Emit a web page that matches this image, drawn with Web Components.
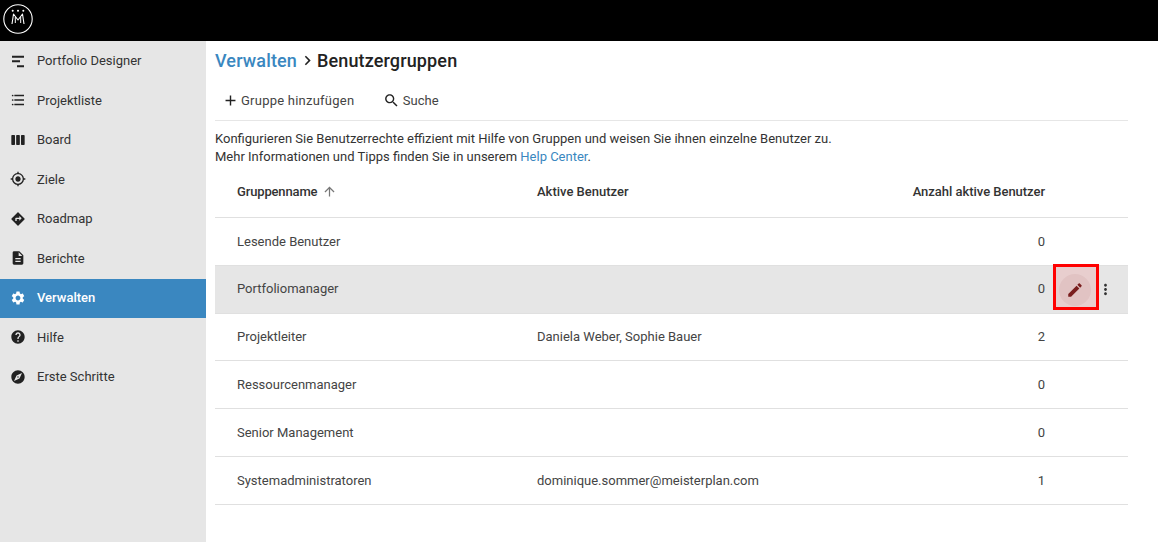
<!DOCTYPE html>
<html lang="de"><head><meta charset="utf-8"><title>Benutzergruppen</title>
<style>
html,body{margin:0;height:100%;background:#fff}
body{font:13px Roboto,"Liberation Sans",sans-serif;color:#333}
</style></head><body>
<app-shell>
  <top-bar slot="top"></top-bar>
  <side-nav slot="nav">
    <nav-item icon="designer">Portfolio Designer</nav-item>
    <nav-item icon="list">Projektliste</nav-item>
    <nav-item icon="board">Board</nav-item>
    <nav-item icon="target">Ziele</nav-item>
    <nav-item icon="road">Roadmap</nav-item>
    <nav-item icon="doc">Berichte</nav-item>
    <nav-item icon="gear" active>Verwalten</nav-item>
    <nav-item icon="help">Hilfe</nav-item>
    <nav-item icon="compass">Erste Schritte</nav-item>
  </side-nav>
  <page-head>
    <a slot="parent">Verwalten</a>
    <span slot="current">Benutzergruppen</span>
  </page-head>
  <tool-bar></tool-bar>
  <intro-text></intro-text>
  <group-table>
    <group-row name="Lesende Benutzer" count="0"></group-row>
    <group-row name="Portfoliomanager" count="0" hover></group-row>
    <group-row name="Projektleiter" users="Daniela Weber, Sophie Bauer" count="2"></group-row>
    <group-row name="Ressourcenmanager" count="0"></group-row>
    <group-row name="Senior Management" count="0"></group-row>
    <group-row name="Systemadministratoren" users="dominique.sommer@meisterplan.com" count="1"></group-row>
  </group-table>
</app-shell>
<script>
const P={
designer:'<path d="M3 4h18v3H3zM3 11h12v3H3zM10.5 18.5H21v3H10.5z"/>',
list:'<path d="M6.5 4.2H21v2.1H6.5zM6.5 11H21v2.1H6.5zM6.5 17.7H21v2.1H6.5z"/><circle cx="4" cy="5.25" r="1.3"/><circle cx="4" cy="12" r="1.3"/><circle cx="4" cy="18.75" r="1.3"/>',
board:'<path d="M6.5 4.5H3c-.55 0-1 .45-1 1v13c0 .55.45 1 1 1h3.500c.55 0 1-.45 1-1v-13c0-.55-.45-1-1-1zm14.500 0h-3.500c-.55 0-1 .45-1 1v13c0 .55.45 1 1 1H21c.55 0 1-.45 1-1v-13c0-.55-.45-1-1-1zm-7.250 0h-3.500c-.55 0-1 .45-1 1v13c0 .55.45 1 1 1h3.500c.55 0 1-.45 1-1v-13c0-.55-.45-1-1-1z"/>',
target:'<path d="M12 8c-2.21 0-4 1.79-4 4s1.79 4 4 4 4-1.79 4-4-1.79-4-4-4zm8.94 3c-.46-4.17-3.77-7.48-7.94-7.94V1h-2v2.06C6.83 3.52 3.52 6.83 3.06 11H1v2h2.06c.46 4.17 3.77 7.48 7.94 7.94V23h2v-2.06c4.17-.46 7.48-3.77 7.94-7.94H23v-2h-2.06zM12 19c-3.87 0-7-3.13-7-7s3.13-7 7-7 7 3.13 7 7-3.13 7-7 7z"/>',
road:'<path d="M21.71 11.29l-9-9c-.39-.39-1.02-.39-1.41 0l-9 9c-.39.39-.39 1.02 0 1.41l9 9c.39.39 1.02.39 1.41 0l9-9c.39-.38.39-1.01 0-1.41zM14 14.5V12h-4v3H8v-4c0-.55.45-1 1-1h5V7.5l3.5 3.5-3.5 3.5z"/>',
doc:'<path d="M14 2H6c-1.1 0-1.99.9-1.99 2L4 20c0 1.1.89 2 1.99 2H18c1.1 0 2-.9 2-2V8l-6-6zm2 16H8v-2h8v2zm0-4H8v-2h8v2zm-3-5V3.5L18.5 9H13z"/>',
gear:'<path d="M19.14 12.94c.04-.3.06-.61.06-.94 0-.32-.02-.64-.07-.94l2.03-1.58c.18-.14.23-.41.12-.61l-1.92-3.32c-.12-.22-.37-.29-.59-.22l-2.39.96c-.5-.38-1.03-.7-1.62-.94l-.36-2.54c-.04-.24-.24-.41-.48-.41h-3.84c-.24 0-.43.17-.47.41l-.36 2.54c-.59.24-1.13.57-1.62.94l-2.39-.96c-.22-.08-.47 0-.59.22L2.74 8.87c-.12.21-.08.47.12.61l2.03 1.58c-.05.3-.09.63-.09.94s.02.64.07.94l-2.03 1.58c-.18.14-.23.41-.12.61l1.92 3.32c.12.22.37.29.59.22l2.39-.96c.5.38 1.03.7 1.62.94l.36 2.54c.05.24.24.41.48.41h3.84c.24 0 .44-.17.47-.41l.36-2.54c.59-.24 1.13-.56 1.62-.94l2.39.96c.22.08.47 0 .59-.22l1.92-3.32c.12-.22.07-.47-.12-.61l-2.01-1.58zM12 15.6c-1.98 0-3.6-1.62-3.6-3.6s1.62-3.6 3.6-3.6 3.6 1.62 3.6 3.6-1.62 3.6-3.6 3.6z"/>',
help:'<path d="M12 2C6.48 2 2 6.48 2 12s4.48 10 10 10 10-4.48 10-10S17.52 2 12 2zm1 17h-2v-2h2v2zm2.07-7.75l-.9.92C13.45 12.9 13 13.5 13 15h-2v-.5c0-1.1.45-2.1 1.17-2.83l1.24-1.26c.37-.36.59-.86.59-1.41 0-1.1-.9-2-2-2s-2 .9-2 2H8c0-2.21 1.79-4 4-4s4 1.79 4 4c0 .88-.36 1.68-.93 2.25z"/>',
compass:'<path d="M12 10.9c-.61 0-1.1.49-1.1 1.1s.49 1.1 1.1 1.1c.61 0 1.1-.49 1.1-1.1s-.49-1.1-1.1-1.1zM12 2C6.48 2 2 6.48 2 12s4.48 10 10 10 10-4.48 10-10S17.52 2 12 2zm2.19 12.19L6 18l3.81-8.19L18 6l-3.81 8.19z"/>',
edit:'<path d="M3 17.25V21h3.75L17.81 9.94l-3.75-3.75L3 17.25zM20.71 7.04c.39-.39.39-1.02 0-1.41l-2.34-2.34c-.39-.39-1.02-.39-1.41 0l-1.83 1.83 3.75 3.75 1.83-1.83z"/>',
search:'<path d="M15.5 14h-.79l-.28-.27C15.41 12.59 16 11.11 16 9.5 16 5.91 13.09 3 9.5 3S3 5.91 3 9.5 5.91 16 9.5 16c1.61 0 3.09-.59 4.23-1.57l.27.28v.79l5 4.99L20.49 19l-4.99-5zm-6 0C7.01 14 5 11.99 5 9.5S7.01 5 9.5 5 14 7.01 14 9.5 11.99 14 9.5 14z"/>',
add:'<path d="M19 13h-6v6h-2v-6H5v-2h6V5h2v6h6v2z"/>',
up:'<path d="M4 12l1.41 1.41L11 7.83V20h2V7.83l5.58 5.59L20 12l-8-8-8 8z"/>',
more:'<path d="M12 8c1.1 0 2-.9 2-2s-.9-2-2-2-2 .9-2 2 .9 2 2 2zm0 2c-1.1 0-2 .9-2 2s.9 2 2 2 2-.9 2-2-.9-2-2-2zm0 6c-1.1 0-2 .9-2 2s.9 2 2 2 2-.9 2-2-.9-2-2-2z"/>',
chev:'<path d="M10 6L8.59 7.41 13.17 12l-4.58 4.59L10 18l6-6z"/>'
};
const ic=(n,s=16,c='currentColor')=>`<svg width="${s}" height="${s}" viewBox="0 0 24 24" fill="${c}" style="display:block;flex:none">${P[n]}</svg>`;
class Base extends HTMLElement{
  connectedCallback(){ if(!this.shadowRoot){this.attachShadow({mode:'open'}).innerHTML=this.html();} }
}
customElements.define('app-shell',class extends Base{html(){return `<style>
:host{display:grid;grid-template-columns:206px 1fr;grid-template-rows:41px 1fr;height:542px;overflow:hidden}
.top{grid-column:1/3}
main{padding:0 30px 0 9px;min-width:0}
</style><div class="top"><slot name="top"></slot></div><slot name="nav"></slot><main><slot></slot></main>`}});
customElements.define('top-bar',class extends Base{html(){return `<style>
:host{display:flex;align-items:center;height:41px;background:#000;padding-left:3px;box-sizing:border-box}
</style><svg width="30" height="30" viewBox="0 0 30 30" fill="none" stroke="#fff" style="display:block;margin-top:-3px">
<circle cx="15" cy="15" r="14.2" stroke-width="1.1"/>
<path d="M9 20 10.5 10 15 16 19.500 10 21 20" stroke-width="1.1" stroke-linejoin="round"/>
<path d="M12.300 19V13M17.700 19V13" stroke-width="1"/>
<circle cx="9.700" cy="6.800" r="1" fill="#fff" stroke="none"/><circle cx="15" cy="6.800" r="1" fill="#fff" stroke="none"/><circle cx="20.300" cy="6.800" r="1" fill="#fff" stroke="none"/>
</svg>`}});
customElements.define('side-nav',class extends Base{html(){return `<style>
:host{display:block;background:#e6e6e6}
</style><slot></slot>`}});
customElements.define('nav-item',class extends Base{html(){const a=this.hasAttribute('active');return `<style>
:host{display:flex;align-items:center;height:39.5px;padding-left:10px;gap:11px;font-size:13px;color:${a?'#fff':'#333'};background:${a?'linear-gradient(transparent 1px,#3a87c0 1px)':'transparent'};${a?'font-weight:500;':''}}
</style>${ic(this.getAttribute('icon'),16,a?'#fff':'#222')}<slot></slot>`}});
customElements.define('page-head',class extends Base{html(){return `<style>
:host{display:flex;align-items:center;padding-bottom:1px;box-sizing:border-box;height:40px;font-size:18px;font-weight:500;color:#222;letter-spacing:.14px}
::slotted([slot=parent]){color:#3a87c0}
svg{margin:0 0 0 1px}
</style><slot name="parent"></slot>${ic('chev',19,'#222')}<slot name="current"></slot>`}});
customElements.define('tool-bar',class extends Base{html(){return `<style>
:host{display:flex;align-items:center;height:39px;border-bottom:1px solid #e6e6e6;font-size:13px;color:#444;padding-left:6.5px}
span{display:flex;align-items:center;gap:2.5px}
span+span{margin-left:29px}
.g{letter-spacing:.235px}
</style><span class="g">${ic('add',17,'#222')}Gruppe hinzufügen</span><span>${ic('search',17,'#222')}Suche</span>`}});
customElements.define('intro-text',class extends Base{html(){return `<style>
:host{display:block;font-size:13px;line-height:18px;color:#333;padding-top:9px}
a{color:#3a87c0}
</style>Konfigurieren Sie Benutzerrechte effizient mit Hilfe von Gruppen und weisen Sie ihnen einzelne Benutzer zu.<br>Mehr Informationen und Tipps finden Sie in unserem <a>Help Center</a>.`}});
const COL=`display:grid;grid-template-columns:300px 1fr 130px 83px;align-items:center;padding-left:22px;box-sizing:border-box`;
customElements.define('group-table',class extends Base{html(){return `<style>
:host{display:block;font-size:13px}
.h{${COL};height:52px;font-weight:500;color:#333;border-bottom:1px solid #e0e0e0;font-size:13px}
.n{display:flex;align-items:center;gap:5px}
.n span{letter-spacing:-.15px}
.r{grid-column:3/4;justify-self:end;white-space:nowrap;letter-spacing:-.03px}
</style><div class="h"><div class="n"><span>Gruppenname</span>${ic('up',15,'#777')}</div><div>Aktive Benutzer</div><div class="r">Anzahl aktive Benutzer</div></div><slot></slot>`}});
customElements.define('group-row',class extends Base{html(){const g=k=>this.getAttribute(k)||'';const h=this.hasAttribute('hover');return `<style>
:host{${COL};position:relative;height:47.8px;${h?'padding-bottom:1.5px;':''}border-bottom:1px solid #e0e0e0;color:#444;background:${h?'#e6e6e6':'transparent'}}
.c{text-align:right}
.hl{position:absolute;left:838px;top:-1.8px;width:46px;height:46px;border:3px solid #f00;box-sizing:border-box;background:rgba(255,0,0,.1)}
.circle{position:absolute;left:3px;top:7px;width:32px;height:32px;border-radius:50%;background:rgba(122,30,30,.06);display:flex;align-items:center;justify-content:center}
.more{position:absolute;left:881.5px;top:15px}
</style><div>${g('name')}</div><div>${g('users')}</div><div class="c">${g('count')}</div>${h?`<div class="hl"><div class="circle">${ic('edit',18,'#7a1e1e')}</div></div><div class="more">${ic('more',17,'#333')}</div>`:''}`}});
</script>
</body></html>
